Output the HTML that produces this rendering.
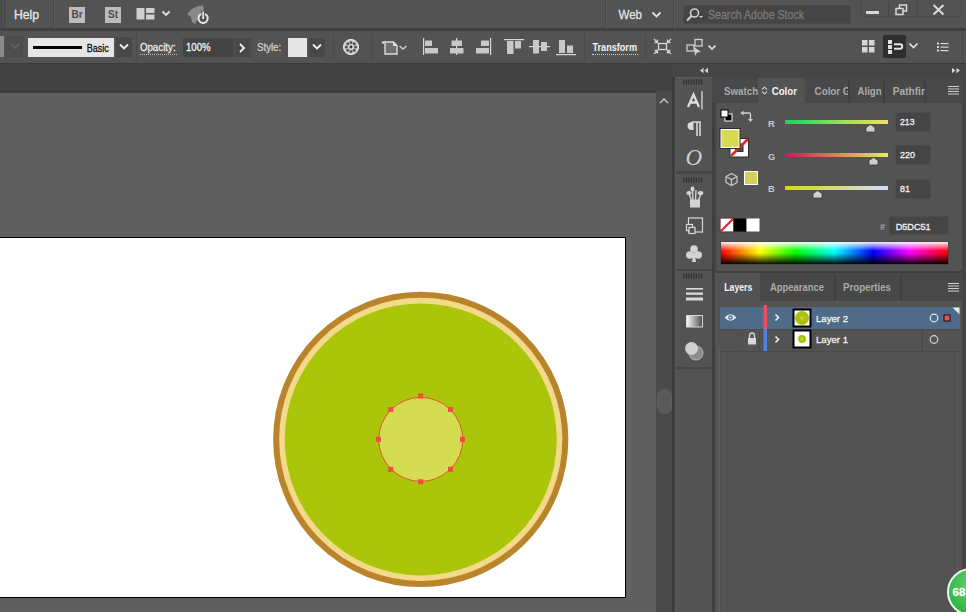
<!DOCTYPE html>
<html><head><meta charset="utf-8">
<style>
*{margin:0;padding:0;box-sizing:border-box}
html,body{width:966px;height:612px;overflow:hidden;background:#535353;font-family:"Liberation Sans",sans-serif;}
.a{position:absolute}
#menubar{left:0;top:0;width:966px;height:30px;background:#535353}
#menuline{left:0;top:28px;width:966px;height:3px;background:#3f3f3f}
#ctrl{left:0;top:31px;width:966px;height:32px;background:#535353}
#ctrlline{left:0;top:63px;width:966px;height:2px;background:#3b3b3b}
#tabstrip{left:0;top:64px;width:672px;height:26px;background:#434343}
#tabline{left:0;top:90px;width:656px;height:3px;background:#3c3c3c}
#paste{left:0;top:93px;width:656px;height:519px;background:#5f5f5f}
#sbtrack{left:656px;top:90px;width:16px;height:522px;background:#4a4a4a}
#sbthumb{left:657px;top:389px;width:15px;height:25px;background:#595959;border:1px solid #5e5e5e;border-radius:7px}
#vline1{left:672px;top:64px;width:3px;height:548px;background:#3c3c3c}
#toolcol{left:675px;top:77px;width:37px;height:535px;background:#535353;border-left:3px solid #5a5a5a}
#dockline{left:712px;top:103px;width:3px;height:509px;background:#3e3e3e}
#dockstrip{left:672px;top:64px;width:294px;height:13px;background:#454545}
#artboard{left:-2px;top:237px;width:628px;height:361px;background:#fff;border:1px solid #000}
.txt{color:#e4e4e4;font-size:13px;white-space:nowrap}
</style></head><body>
<div class="a" id="menubar"></div>
<div class="a" id="menuline"></div>
<div class="a" id="ctrl"></div>
<div class="a" id="ctrlline"></div>
<div class="a" id="tabstrip"></div>
<div class="a" id="tabline"></div>
<div class="a" id="paste"></div>
<div class="a" id="artboard"></div>
<div class="a" style="left:628px;top:238px;width:2px;height:360px;background:#656565"></div>
<div class="a" id="sbtrack"></div>
<div class="a" id="sbthumb"></div>
<svg class="a" style="left:656px;top:95px" width="16" height="12"><path d="M4 8 L8 4 L12 8" fill="none" stroke="#bdbdbd" stroke-width="1.6"/></svg>
<div class="a" id="vline1"></div>
<div class="a" id="dockstrip"></div>
<div class="a" id="toolcol"></div>
<div class="a" id="dockline"></div>


<!-- CONTROL BAR -->
<div class="a" style="left:0;top:36px;width:4px;height:21px;background:#8c8c8c"></div>
<div class="a" style="left:6px;top:36px;width:17px;height:21px;background:#4d4d4d;border:1px solid #4a4a4a"></div>
<svg class="a" style="left:9px;top:42px" width="12" height="8"><path d="M2 2 L6 6 L10 2" fill="none" stroke="#666" stroke-width="1.6"/></svg>
<div class="a" style="left:28px;top:38px;width:86px;height:19px;background:#e6e6e6"></div>
<div class="a" style="left:33px;top:46px;width:49px;height:3px;background:#000"></div>
<div class="a" style="left:116px;top:37px;width:16px;height:20px;background:#484848"></div>
<svg class="a" style="left:118px;top:42px" width="12" height="9"><path d="M2 2.5 L6 6.5 L10 2.5" fill="none" stroke="#eee" stroke-width="1.8"/></svg>
<div class="a" style="left:136px;top:34px;width:1px;height:26px;background:#4a4a4a"></div>
<div class="a" style="left:140px;top:54px;width:37px;height:1px;border-top:1px dotted #bdbdbd"></div>
<div class="a" style="left:183px;top:38px;width:51px;height:19px;background:#444"></div>
<div class="a" style="left:235px;top:38px;width:16px;height:19px;background:#484848"></div>
<svg class="a" style="left:237px;top:42px" width="10" height="12"><path d="M3 2 L7 6 L3 10" fill="none" stroke="#eee" stroke-width="1.8"/></svg>
<div class="a" style="left:288px;top:38px;width:19px;height:19px;background:#e6e6e6"></div>
<div class="a" style="left:309px;top:38px;width:16px;height:19px;background:#484848"></div>
<svg class="a" style="left:311px;top:42px" width="12" height="9"><path d="M2 2.5 L6 6.5 L10 2.5" fill="none" stroke="#eee" stroke-width="1.8"/></svg>
<div class="a" style="left:333px;top:34px;width:1px;height:26px;background:#4a4a4a"></div>
<svg class="a" style="left:341px;top:37px" width="20" height="20">
  <circle cx="10" cy="10" r="7.6" fill="#cfcfcf" stroke="#e4e4e4" stroke-width="1"/>
  <circle cx="14.60" cy="10.00" r="1.5" fill="#555"/><circle cx="13.25" cy="13.25" r="1.5" fill="#555"/><circle cx="10.00" cy="14.60" r="1.5" fill="#555"/><circle cx="6.75" cy="13.25" r="1.5" fill="#555"/><circle cx="5.40" cy="10.00" r="1.5" fill="#555"/><circle cx="6.75" cy="6.75" r="1.5" fill="#555"/><circle cx="10.00" cy="5.40" r="1.5" fill="#555"/><circle cx="13.25" cy="6.75" r="1.5" fill="#555"/>
  <circle cx="10" cy="10" r="1.4" fill="#333"/>
</svg>
<div class="a" style="left:372px;top:34px;width:1px;height:26px;background:#4b4b4b"></div>
<svg class="a" style="left:378px;top:37px" width="32" height="20">
  <path d="M7 5 L15.5 5 L19 8.5 L19 17 L7 17 Z" fill="#6e6e6e" stroke="#dcdcdc" stroke-width="1.4"/>
  <path d="M15.5 5 L15.5 8.5 L19 8.5" fill="#dcdcdc" stroke="#dcdcdc" stroke-width="1"/>
  <path d="M3 5.5 L6.5 3.5 L6.5 7.5 Z" fill="#cfcfcf"/>
  <path d="M21.5 9 L25 12 L28.5 9" fill="none" stroke="#cfcfcf" stroke-width="1.5"/>
</svg>
<svg class="a" style="left:420px;top:36px" width="170" height="22">
  <!-- align left -->
  <rect x="3" y="2" width="1.2" height="17" fill="#d8d8d8"/>
  <rect x="5" y="4.5" width="7" height="5.5" fill="#c8c8c8"/>
  <rect x="5" y="12" width="13" height="5.5" fill="#c8c8c8"/>
  <!-- align h center -->
  <rect x="36" y="2" width="1.2" height="17" fill="#d8d8d8"/>
  <rect x="31.5" y="4.5" width="10.5" height="5.5" fill="#c8c8c8"/>
  <rect x="30" y="12" width="13.5" height="5.5" fill="#c8c8c8"/>
  <!-- align right -->
  <rect x="70" y="2" width="1.2" height="17" fill="#d8d8d8"/>
  <rect x="61" y="4.5" width="8" height="5.5" fill="#c8c8c8"/>
  <rect x="56" y="12" width="13" height="5.5" fill="#c8c8c8"/>
  <!-- align top -->
  <rect x="84" y="3" width="20" height="1.2" fill="#d8d8d8"/>
  <rect x="87" y="5" width="6.5" height="13" fill="#c8c8c8"/>
  <rect x="95" y="5" width="6" height="7.5" fill="#c8c8c8"/>
  <!-- align v center -->
  <rect x="109" y="10" width="21" height="1.2" fill="#d8d8d8"/>
  <rect x="113" y="4" width="6" height="13.5" fill="#c8c8c8"/>
  <rect x="121" y="6" width="6" height="9" fill="#c8c8c8"/>
  <!-- align bottom -->
  <rect x="136" y="18" width="20" height="1.2" fill="#d8d8d8"/>
  <rect x="139" y="4" width="6" height="13" fill="#c8c8c8"/>
  <rect x="147" y="9.5" width="6" height="7.5" fill="#c8c8c8"/>
</svg>
<div class="a" style="left:584px;top:34px;width:1px;height:26px;background:#4a4a4a"></div>
<div class="a" style="left:592px;top:54px;width:46px;height:1px;border-top:1px dotted #cfcfcf"></div>
<div class="a" style="left:645px;top:34px;width:1px;height:26px;background:#4a4a4a"></div>
<svg class="a" style="left:652px;top:37px" width="22" height="20">
  <rect x="6.5" y="6.5" width="8" height="6" fill="none" stroke="#d8d8d8" stroke-width="1.3"/>
  <path d="M2 2 L5.5 5.5 M2.5 5.5 L5.5 5.5 L5.5 2.5" fill="none" stroke="#d0d0d0" stroke-width="1.3"/>
  <path d="M19 2 L15.5 5.5 M18.5 5.5 L15.5 5.5 L15.5 2.5" fill="none" stroke="#d0d0d0" stroke-width="1.3"/>
  <path d="M2 17 L5.5 13.5 M2.5 13.5 L5.5 13.5 L5.5 16.5" fill="none" stroke="#d0d0d0" stroke-width="1.3"/>
  <path d="M19 17 L15.5 13.5 M18.5 13.5 L15.5 13.5 L15.5 16.5" fill="none" stroke="#d0d0d0" stroke-width="1.3"/>
</svg>
<svg class="a" style="left:684px;top:37px" width="36" height="20">
  <rect x="3" y="8" width="7" height="6" fill="none" stroke="#d0d0d0" stroke-width="1.3"/>
  <rect x="11" y="2.5" width="7" height="6.5" fill="none" stroke="#d0d0d0" stroke-width="1.3"/>
  <path d="M10 10 L17 15 L13 15.5 L11 19 Z" fill="#d0d0d0"/>
  <path d="M24.5 8.5 L28 12 L31.5 8.5" fill="none" stroke="#e0e0e0" stroke-width="1.7"/>
</svg>
<svg class="a" style="left:858px;top:37px" width="22" height="20">
  <rect x="4" y="3" width="5.5" height="5.5" fill="#d6d6d6"/>
  <rect x="11" y="3" width="5.5" height="5.5" fill="#d6d6d6"/>
  <rect x="4" y="10" width="5.5" height="5.5" fill="#d6d6d6"/>
  <rect x="11" y="10" width="5.5" height="5.5" fill="#d6d6d6"/>
</svg>
<div class="a" style="left:883px;top:35px;width:23px;height:23px;background:#2e2e2e;border-radius:2px"></div>
<svg class="a" style="left:883px;top:35px" width="23" height="23">
  <rect x="5" y="5" width="4" height="4" fill="#e0e0e0"/>
  <rect x="5" y="10" width="4" height="4" fill="#e0e0e0"/>
  <rect x="5" y="15" width="4" height="4" fill="#e0e0e0"/>
  <path d="M11 9.2 L17 9.2 Q19.2 9.2 19.2 11.5 Q19.2 13.8 17 13.8 L11 13.8" fill="none" stroke="#e0e0e0" stroke-width="2"/>
</svg>
<svg class="a" style="left:907px;top:40px" width="14" height="12"><path d="M2.5 3.5 L6.5 7.5 L10.5 3.5" fill="none" stroke="#e0e0e0" stroke-width="1.7"/></svg>
<svg class="a" style="left:934px;top:40px" width="18" height="14">
  <rect x="3" y="2.5" width="2" height="2" fill="#d6d6d6"/><rect x="6.5" y="3" width="8" height="1.2" fill="#d6d6d6"/>
  <rect x="3" y="6" width="2" height="2" fill="#d6d6d6"/><rect x="6.5" y="6.5" width="8" height="1.2" fill="#d6d6d6"/>
  <rect x="3" y="9.5" width="2" height="2" fill="#d6d6d6"/><rect x="6.5" y="10" width="8" height="1.2" fill="#d6d6d6"/>
</svg>
<div class="a" style="left:962px;top:31px;width:1px;height:32px;background:#474747"></div>


<!-- DOCK -->
<svg class="a" style="left:698px;top:66px" width="12" height="9"><path d="M5.5 1.8 L2 4.5 L5.5 7.2 Z M10 1.8 L6.5 4.5 L10 7.2 Z" fill="#d4d4d4"/></svg>
<svg class="a" style="left:950px;top:66px" width="12" height="9"><path d="M2 1.8 L5.5 4.5 L2 7.2 Z M6.5 1.8 L10 4.5 L6.5 7.2 Z" fill="#d4d4d4"/></svg>
<!-- tool groups -->
<div class="a" style="left:676px;top:77px;width:36px;height:94px;background:#535353;border-top:1px solid #5a5a5a"></div>
<div class="a" style="left:676px;top:171px;width:36px;height:3px;background:#464646"></div>
<div class="a" style="left:676px;top:174px;width:36px;height:95px;background:#535353"></div>
<div class="a" style="left:676px;top:269px;width:36px;height:2px;background:#464646"></div>
<div class="a" style="left:676px;top:271px;width:36px;height:96px;background:#535353"></div>
<div class="a" style="left:676px;top:367px;width:36px;height:2px;background:#464646"></div>
<div class="a" style="left:676px;top:369px;width:36px;height:243px;background:#535353"></div>
<svg class="a" style="left:683px;top:79px" width="21" height="6"><path d="M1 0.5 V5.5 M3.5 0.5 V5.5 M6 0.5 V5.5 M8.5 0.5 V5.5 M11 0.5 V5.5 M13.5 0.5 V5.5 M16 0.5 V5.5 M18.5 0.5 V5.5" stroke="#333" stroke-width="1.3"/></svg>
<svg class="a" style="left:683px;top:177px" width="21" height="6"><path d="M1 0.5 V5.5 M3.5 0.5 V5.5 M6 0.5 V5.5 M8.5 0.5 V5.5 M11 0.5 V5.5 M13.5 0.5 V5.5 M16 0.5 V5.5 M18.5 0.5 V5.5" stroke="#333" stroke-width="1.3"/></svg>
<svg class="a" style="left:683px;top:273px" width="21" height="6"><path d="M1 0.5 V5.5 M3.5 0.5 V5.5 M6 0.5 V5.5 M8.5 0.5 V5.5 M11 0.5 V5.5 M13.5 0.5 V5.5 M16 0.5 V5.5 M18.5 0.5 V5.5" stroke="#333" stroke-width="1.3"/></svg>
<!-- tool icons -->
<svg class="a" style="left:676px;top:77px" width="36" height="292">
  <!-- A| -->
  <path d="M12 30 L17.5 17.5 L23 30 M14 25.5 L21 25.5" fill="none" stroke="#dcdcdc" stroke-width="2.3"/>
  <rect x="25.3" y="14" width="1.3" height="18.5" fill="#dcdcdc"/>
  <!-- pilcrow -->
  <path d="M16 45 L24 45 L24 59 M21 45 L21 59" fill="none" stroke="#d8d8d8" stroke-width="1.6"/>
  <path d="M16 45 Q11.5 45 11.5 49 Q11.5 53 16 53 L17.5 53 L17.5 45 Z" fill="#d8d8d8"/>
  <!-- italic O -->
  <text x="9.5" y="88" font-family="Liberation Serif" font-style="italic" font-size="23" fill="#d0d0d0">O</text>
  <!-- symbol sprayer -->
  <rect x="14" y="122.5" width="10" height="8" fill="#d4d4d4"/>
  <path d="M17 123 L16.5 113 M19.5 123 L20 113 M15.5 123 L13 117 M22.5 123 L25 117" stroke="#d4d4d4" stroke-width="1.4"/>
  <ellipse cx="16.5" cy="112" rx="2" ry="2.4" fill="#d4d4d4"/>
  <ellipse cx="13" cy="116" rx="2.6" ry="2" fill="#d4d4d4"/>
  <ellipse cx="24.5" cy="116" rx="2.8" ry="2" fill="#d4d4d4"/>
  <!-- artboards -->
  <rect x="12.5" y="141" width="14" height="14" fill="none" stroke="#d8d8d8" stroke-width="1.2"/>
  <rect x="10.5" y="147.5" width="6" height="6" fill="#535353" stroke="#d8d8d8" stroke-width="1.2"/>
  <rect x="13" y="150.5" width="6" height="6" fill="#535353" stroke="#d8d8d8" stroke-width="1.2"/>
  <!-- club -->
  <circle cx="18" cy="172" r="3.8" fill="#d4d4d4"/>
  <circle cx="13.8" cy="178" r="3.8" fill="#d4d4d4"/>
  <circle cx="22.2" cy="178" r="3.8" fill="#d4d4d4"/>
  <path d="M17.2 176 L16 185 L20 185 L18.8 176 Z" fill="#d4d4d4"/>
  <!-- stroke -->
  <rect x="10" y="211" width="17" height="1.6" fill="#dadada"/>
  <rect x="10" y="215.5" width="17" height="2.3" fill="#dadada"/>
  <rect x="10" y="220.5" width="17" height="3" fill="#dadada"/>
  <!-- gradient -->
  <defs><linearGradient id="tg" x1="0" x2="1" y1="0" y2="0"><stop offset="0" stop-color="#fff"/><stop offset="1" stop-color="#4a4a4a"/></linearGradient></defs>
  <rect x="10.5" y="238.5" width="16" height="11.5" fill="url(#tg)" stroke="#d8d8d8" stroke-width="1"/>
  <!-- transparency -->
  <circle cx="20" cy="276" r="7" fill="#8c8c8c" stroke="#bcbcbc" stroke-width="1"/>
  <circle cx="15.5" cy="271.5" r="6.5" fill="#cfcfcf"/>
</svg>
<!-- COLOR PANEL -->
<div class="a" style="left:712px;top:77px;width:250px;height:26px;background:#484848"></div>
<div class="a" style="left:758px;top:78px;width:47px;height:25px;background:#535353"></div>
<div class="a" style="left:716px;top:103px;width:246px;height:168px;background:#535353"></div>
<div class="a" style="left:848px;top:79px;width:2px;height:24px;background:#3f3f3f"></div>
<div class="a" style="left:883px;top:79px;width:2px;height:24px;background:#3f3f3f"></div>
<div class="a" style="left:924px;top:79px;width:2px;height:24px;background:#3f3f3f"></div>
<div class="a" style="left:962px;top:77px;width:4px;height:535px;background:#444"></div>
<svg class="a" style="left:760px;top:85px" width="9" height="11"><path d="M2 4.5 L4.5 2 L7 4.5 M2 6.5 L4.5 9 L7 6.5" fill="none" stroke="#c4c4c4" stroke-width="1.2"/></svg>
<svg class="a" style="left:947px;top:85px" width="13" height="11"><path d="M1 1.5 H12 M1 4 H12 M1 6.5 H12 M1 9 H12" stroke="#cfcfcf" stroke-width="1.2"/></svg>
<div class="a" style="left:715px;top:103px;width:2px;height:168px;background:#4a4a4a"></div>

<!-- LAYERS PANEL -->
<div class="a" style="left:716px;top:271px;width:246px;height:2px;background:#3e3e3e"></div>
<div class="a" style="left:715px;top:273px;width:247px;height:28px;background:#484848"></div>
<div class="a" style="left:715px;top:273px;width:45px;height:28px;background:#535353"></div>
<div class="a" style="left:716px;top:301px;width:246px;height:311px;background:#535353"></div>
<div class="a" style="left:834px;top:275px;width:2px;height:26px;background:#3f3f3f"></div>
<div class="a" style="left:900px;top:275px;width:2px;height:26px;background:#3f3f3f"></div>
<svg class="a" style="left:947px;top:282px" width="13" height="11"><path d="M1 1.5 H12 M1 4 H12 M1 6.5 H12 M1 9 H12" stroke="#cfcfcf" stroke-width="1.2"/></svg>
<div class="a" style="left:718px;top:350px;width:2px;height:262px;background:#5b5b5b"></div>
<div class="a" style="left:724px;top:350px;width:1px;height:262px;background:#575757"></div>
<div class="a" style="left:957px;top:350px;width:1px;height:262px;background:#5a5a5a"></div>
<div class="a" style="left:720px;top:307px;width:240px;height:22px;background:#4f6b87"></div>


<!-- COLOR PANEL CONTENT -->
<svg class="a" style="left:716px;top:103px" width="246" height="168">
  <!-- default fill stroke -->
  <rect x="9" y="11" width="7" height="7" fill="#000" stroke="#fff" stroke-width="1"/>
  <rect x="5" y="7" width="7" height="7" fill="#fff" stroke="#000" stroke-width="1"/>
  <!-- swap -->
  <path d="M26 10 L33 10 Q34.5 10 34.5 11.5 L34.5 17" fill="none" stroke="#d0d0d0" stroke-width="1.3"/>
  <path d="M24.5 10 L27.5 7.5 L27.5 12.5 Z M34.5 19 L32 16 L37 16 Z" fill="#d0d0d0"/>
  <!-- stroke none swatch -->
  <rect x="13.5" y="35" width="19.5" height="19.5" fill="#2a2a2a"/>
  <rect x="14.5" y="36" width="17.5" height="17.5" fill="#fff"/>
  <rect x="19" y="40.5" width="8.5" height="8.5" fill="#333"/>
  <rect x="20.5" y="42" width="5.5" height="5.5" fill="#535353"/>
  <path d="M15 53 L32 36" stroke="#e0262a" stroke-width="2.6"/>
  <!-- fill swatch -->
  <rect x="3.5" y="25" width="21" height="21" fill="#2a2a2a"/>
  <rect x="4.5" y="26" width="19" height="19" fill="#fff"/>
  <rect x="5.5" y="27" width="17" height="17" fill="#d5dc51"/>
  <!-- cube -->
  <path d="M15.5 70.5 L21 73.5 L21 79.5 L15.5 82.5 L10 79.5 L10 73.5 Z M10 73.5 L15.5 76.5 L21 73.5 M15.5 76.5 L15.5 82.5" fill="none" stroke="#c8c8c8" stroke-width="1.2"/>
  <!-- small swatch -->
  <rect x="28" y="68" width="14" height="14" fill="#fff"/>
  <rect x="29" y="69" width="12" height="12" fill="#d3d060"/>
  <!-- none black white -->
  <rect x="4.5" y="115.5" width="13" height="13" fill="#fff"/>
  <path d="M4.5 128.5 L17.5 115.5" stroke="#d62a2a" stroke-width="2.2"/>
  <rect x="4" y="115" width="14" height="14" fill="none" stroke="#7a1a1a" stroke-width="1" opacity="0.5"/>
  <rect x="17.5" y="115.5" width="13" height="13" fill="#000"/>
  <rect x="30.5" y="115.5" width="13" height="13" fill="#fff"/>
  <!-- RGB labels -->
  <defs>
    <linearGradient id="gr" x1="0" x2="1"><stop offset="0" stop-color="#10d860"/><stop offset="0.6" stop-color="#a8dc58"/><stop offset="1" stop-color="#f0e060"/></linearGradient>
    <linearGradient id="gg" x1="0" x2="1"><stop offset="0" stop-color="#d81060"/><stop offset="0.5" stop-color="#e08050"/><stop offset="1" stop-color="#dcf060"/></linearGradient>
    <linearGradient id="gb" x1="0" x2="1"><stop offset="0" stop-color="#d5dc00"/><stop offset="1" stop-color="#d5dcff"/></linearGradient>
    <linearGradient id="spec" x1="0" x2="1">
      <stop offset="0" stop-color="#ff0000"/><stop offset="0.17" stop-color="#ffff00"/><stop offset="0.33" stop-color="#00ff00"/>
      <stop offset="0.5" stop-color="#00ffff"/><stop offset="0.67" stop-color="#0000ff"/><stop offset="0.83" stop-color="#ff00ff"/><stop offset="1" stop-color="#ff0000"/>
    </linearGradient>
    <linearGradient id="specw" x1="0" x2="0" y1="0" y2="1"><stop offset="0" stop-color="#fff" stop-opacity="0.95"/><stop offset="0.4" stop-color="#fff" stop-opacity="0"/><stop offset="0.5" stop-color="#000" stop-opacity="0"/><stop offset="1" stop-color="#000" stop-opacity="0.95"/></linearGradient>
  </defs>
  <rect x="69" y="17" width="103" height="4" fill="url(#gr)"/>
  <rect x="69" y="50" width="103" height="4" fill="url(#gg)"/>
  <rect x="69" y="83" width="103" height="4" fill="url(#gb)"/>
  <!-- thumbs -->
  <path d="M150 29 L150 24.5 L154.5 21.5 L159 24.5 L159 29 Z" fill="#cfcfcf" stroke="#3a3a3a" stroke-width="0.8"/>
  <path d="M153 62 L153 57.5 L157.5 54.5 L162 57.5 L162 62 Z" fill="#cfcfcf" stroke="#3a3a3a" stroke-width="0.8"/>
  <path d="M97 95 L97 90.5 L101.5 87.5 L106 90.5 L106 95 Z" fill="#cfcfcf" stroke="#3a3a3a" stroke-width="0.8"/>
  <!-- value boxes -->
  <rect x="179.5" y="9.5" width="35" height="19" fill="#454545" stroke="#4d4d4d" stroke-width="1"/>
  <rect x="179.5" y="42.5" width="35" height="19" fill="#454545" stroke="#4d4d4d" stroke-width="1"/>
  <rect x="179.5" y="76.5" width="35" height="19" fill="#454545" stroke="#4d4d4d" stroke-width="1"/>
  <!-- hex -->
  <rect x="173.5" y="113.5" width="59" height="18" fill="#454545" stroke="#4d4d4d" stroke-width="1"/>
  <!-- spectrum -->
  <rect x="4.5" y="138.5" width="228" height="23" fill="#3a3a3a"/>
  <rect x="5" y="139" width="227" height="22" fill="url(#spec)"/>
  <rect x="5" y="139" width="227" height="22" fill="url(#specw)"/>
</svg>
<!-- LAYER ROWS -->
<svg class="a" style="left:716px;top:301px" width="246" height="60">
  <rect x="4" y="28" width="240" height="22" fill="#535353"/>
  <rect x="4" y="28" width="240" height="1" fill="#4a4a4a"/>
  <rect x="4" y="50" width="240" height="1" fill="#4a4a4a"/>
  <rect x="43" y="28" width="1" height="22" fill="#4a4a4a"/>
  <rect x="205.5" y="28" width="1.5" height="22" fill="#4a4a4a"/>
  <rect x="25" y="28" width="1" height="22" fill="#4e4e4e"/>
  <!-- eye -->
  <path d="M8.5 16.5 Q14.5 10 20.5 16.5 Q14.5 23 8.5 16.5 Z" fill="#dfe6ee"/>
  <circle cx="14.5" cy="16.5" r="2.3" fill="#4f6b87"/>
  <circle cx="14.5" cy="16.5" r="1" fill="#dfe6ee"/>
  <!-- lock -->
  <path d="M33.5 37 L33.5 35 Q33.5 32 36 32 Q38.5 32 38.5 35 L38.5 37" fill="none" stroke="#d8d8d8" stroke-width="1.4"/>
  <rect x="32" y="37" width="8" height="6.5" fill="#d8d8d8"/>
  <!-- color bars -->
  <rect x="47.5" y="4" width="3.5" height="24" fill="#e9505a"/>
  <rect x="47.5" y="28" width="3.5" height="22" fill="#4f7fe0"/>
  <!-- chevrons -->
  <path d="M59.5 13.5 L62.5 16.5 L59.5 19.5" fill="none" stroke="#f0f0f0" stroke-width="1.6"/>
  <path d="M59.5 35.5 L62.5 38.5 L59.5 41.5" fill="none" stroke="#f0f0f0" stroke-width="1.6"/>
  <!-- thumbs -->
  <rect x="77.5" y="8.5" width="17" height="17" fill="#fff" stroke="#000" stroke-width="2"/>
  <circle cx="86" cy="17" r="7" fill="#a9c20e"/>
  <circle cx="86" cy="17" r="1.8" fill="#c5d04a"/>
  <rect x="77.5" y="29.5" width="17" height="17" fill="#fff" stroke="#000" stroke-width="2"/>
  <circle cx="86" cy="38" r="4" fill="#a9c20e"/>
  <circle cx="86" cy="38" r="1.2" fill="#d5dc51"/>
  <!-- names -->
  <!-- targets -->
  <circle cx="218" cy="17" r="3.8" fill="none" stroke="#e0e8f0" stroke-width="1.2"/>
  <circle cx="218" cy="38.5" r="3.8" fill="none" stroke="#d8d8d8" stroke-width="1.2"/>
  <rect x="228" y="14" width="6" height="6" fill="#e9505a" stroke="#111" stroke-width="1"/>
  <path d="M236.5 6.5 L243.5 6.5 L243.5 13.5 Z" fill="#e8e8e8"/>
</svg>
<!-- badge -->
<svg class="a" style="left:940px;top:560px" width="26" height="52">
  <defs><radialGradient id="bg1" cx="0.6" cy="0.35" r="0.7"><stop offset="0" stop-color="#67d772"/><stop offset="1" stop-color="#2fb242"/></radialGradient></defs>
  <circle cx="31" cy="32" r="23" fill="url(#bg1)" stroke="#e8f8ea" stroke-width="2"/>
</svg>

<!-- circle -->
<svg class="a" style="left:0;top:0" width="966" height="612">
  <circle cx="420.75" cy="439.4" r="144.6" fill="#f3d98a" stroke="#b9842b" stroke-width="6"/>
  <circle cx="420.75" cy="439.4" r="136" fill="#abc50a"/>
  <circle cx="420.75" cy="439.4" r="42" fill="#d5dc51" stroke="#e8532f" stroke-width="1"/>
  <rect x="418.2" y="393.5" width="5" height="5" fill="#ee4f3a"/><rect x="448.0" y="407.0" width="5" height="5" fill="#ee4f3a"/><rect x="460.0" y="436.9" width="5" height="5" fill="#ee4f3a"/><rect x="448.0" y="466.8" width="5" height="5" fill="#ee4f3a"/><rect x="418.2" y="479.2" width="5" height="5" fill="#ee4f3a"/><rect x="388.2" y="466.8" width="5" height="5" fill="#ee4f3a"/><rect x="376.0" y="436.9" width="5" height="5" fill="#ee4f3a"/><rect x="388.2" y="407.0" width="5" height="5" fill="#ee4f3a"/>
</svg>


<!-- MENU BAR -->
<div class="a" style="left:0;top:0;width:3px;height:29px;background:#4a4a4a"></div>
<div class="a" style="left:4px;top:0;width:1px;height:29px;background:#434343"></div>
<div class="a" style="left:53px;top:0;width:1px;height:29px;background:#474747"></div>
<div class="a" style="left:54px;top:0;width:1px;height:29px;background:#5b5b5b"></div>
<div class="a" style="left:69px;top:7px;width:16px;height:16px;background:#bcbcbc;color:#4c4c4c;font-size:10px;font-weight:bold;line-height:16px;text-align:center;letter-spacing:0px">Br</div>
<div class="a" style="left:105px;top:7px;width:16px;height:16px;background:#bcbcbc;color:#4c4c4c;font-size:10px;font-weight:bold;line-height:16px;text-align:center">St</div>
<svg class="a" style="left:136px;top:7px" width="40" height="14">
  <rect x="0.5" y="1" width="8" height="11.5" fill="#d0d0d0"/>
  <rect x="10" y="1" width="8.5" height="5" fill="#d0d0d0"/>
  <rect x="10" y="7.5" width="8.5" height="5" fill="#d0d0d0"/>
  <path d="M26.5 4.5 L30 8 L33.5 4.5" fill="none" stroke="#e0e0e0" stroke-width="1.8"/>
</svg>
<svg class="a" style="left:184px;top:0" width="28" height="26">
  <path d="M3 14 L8 9 L14 6 L19 5.5 L20 9 L17 14 L14 19 L11 24 L8 22 L7 17 Z" fill="#8a8a8a"/>
  <circle cx="19.1" cy="18.3" r="4.6" fill="#535353" stroke="#e8e8e8" stroke-width="2"/>
  <rect x="17.3" y="11" width="3.6" height="8.5" fill="#535353"/>
  <rect x="18.3" y="11.5" width="1.7" height="7.5" fill="#e8e8e8"/>
</svg>
<div class="a" style="left:605px;top:0;width:1px;height:29px;background:#474747"></div>
<div class="a" style="left:606px;top:0;width:1px;height:29px;background:#5a5a5a"></div>
<svg class="a" style="left:650px;top:10px" width="14" height="10">
  <path d="M2.5 2.5 L6.5 6.5 L10.5 2.5" fill="none" stroke="#e0e0e0" stroke-width="1.8"/>
</svg>
<div class="a" style="left:673px;top:0;width:1px;height:29px;background:#474747"></div>
<div class="a" style="left:674px;top:0;width:1px;height:29px;background:#5a5a5a"></div>
<div class="a" style="left:683px;top:5px;width:168px;height:19px;background:#454545;border:1px solid #4a4a4a"></div>
<svg class="a" style="left:685px;top:7px" width="22" height="16">
  <circle cx="9.5" cy="6" r="4" fill="none" stroke="#cfcfcf" stroke-width="1.6"/>
  <path d="M6.7 8.8 L2 13.5" stroke="#cfcfcf" stroke-width="2"/>
  <path d="M14 9 L16 11 L18 9 Z" fill="#cfcfcf"/>
</svg>
<div class="a" style="left:860px;top:0;width:1px;height:17px;background:#484848"></div>
<div class="a" style="left:888px;top:0;width:1px;height:17px;background:#484848"></div>
<div class="a" style="left:917px;top:0;width:1px;height:17px;background:#484848"></div>
<div class="a" style="left:961px;top:0;width:1px;height:17px;background:#484848"></div>
<div class="a" style="left:860px;top:16px;width:102px;height:1px;background:#4b4b4b"></div>
<div class="a" style="left:866px;top:11px;width:13px;height:3px;background:#d8d8d8"></div>
<svg class="a" style="left:894px;top:4px" width="16" height="12">
  <rect x="5.5" y="1" width="7" height="6" fill="none" stroke="#d8d8d8" stroke-width="1.5"/>
  <rect x="2" y="4.5" width="7" height="6" fill="#535353" stroke="#d8d8d8" stroke-width="1.5"/>
</svg>
<svg class="a" style="left:931px;top:3px" width="15" height="13">
  <path d="M2.5 2 L12.5 11.5 M12.5 2 L2.5 11.5" stroke="#dadada" stroke-width="2"/>
</svg>


<!-- TEXT OVERLAY -->
<svg class="a" style="left:0;top:0" width="966" height="612" font-family="Liberation Sans">
  <text stroke="#e8e8e8" stroke-width="0.3" x="14" y="19.3" font-size="13" fill="#e8e8e8" textLength="25" lengthAdjust="spacingAndGlyphs">Help</text>
  <text stroke="#e2e2e2" stroke-width="0.3" x="618.5" y="19" font-size="13" fill="#e2e2e2" textLength="23.5" lengthAdjust="spacingAndGlyphs">Web</text>
  <text stroke="#7a7a7a" stroke-width="0.3" x="708" y="18.7" font-size="12" fill="#7a7a7a" textLength="96" lengthAdjust="spacingAndGlyphs">Search Adobe Stock</text>
  <text stroke="#111" stroke-width="0.3" x="86.7" y="51.7" font-size="10" fill="#111" textLength="22" lengthAdjust="spacingAndGlyphs">Basic</text>
  <text stroke="#e8e8e8" stroke-width="0.3" x="139.9" y="51.3" font-size="10.4" fill="#e8e8e8" textLength="35.7" lengthAdjust="spacingAndGlyphs">Opacity:</text>
  <text stroke="#f0f0f0" stroke-width="0.3" x="186" y="51.3" font-size="10.4" fill="#f0f0f0" textLength="24.5" lengthAdjust="spacingAndGlyphs">100%</text>
  <text stroke="#cccccc" stroke-width="0.3" x="257" y="51.3" font-size="10.4" fill="#cccccc" textLength="24.2" lengthAdjust="spacingAndGlyphs">Style:</text>
  <text x="592.5" y="51.3" font-size="10.2" font-weight="bold" fill="#f4f4f4" textLength="44.5" lengthAdjust="spacingAndGlyphs">Transform</text>
  <svg x="716" y="77" width="42" height="26"><text x="8" y="17.8" font-size="10.3" font-weight="bold" fill="#ababab" textLength="45" lengthAdjust="spacingAndGlyphs">Swatches</text></svg>
  <text x="771.7" y="94.8" font-size="10.3" font-weight="bold" fill="#f4f4f4" textLength="25.3" lengthAdjust="spacingAndGlyphs">Color</text>
  <svg x="806" y="77" width="42" height="26"><text x="8.6" y="17.8" font-size="10.3" font-weight="bold" fill="#ababab" textLength="56" lengthAdjust="spacingAndGlyphs">Color Guide</text></svg>
  <text x="857.6" y="94.8" font-size="10.3" font-weight="bold" fill="#ababab" textLength="24" lengthAdjust="spacingAndGlyphs">Align</text>
  <svg x="885" y="77" width="40" height="26"><text x="7.8" y="17.8" font-size="10.3" font-weight="bold" fill="#ababab" textLength="50" lengthAdjust="spacingAndGlyphs">Pathfinder</text></svg>
  <text x="724.3" y="290.8" font-size="10.3" font-weight="bold" fill="#f4f4f4" textLength="28" lengthAdjust="spacingAndGlyphs">Layers</text>
  <text x="770" y="290.8" font-size="10.3" font-weight="bold" fill="#ababab" textLength="54" lengthAdjust="spacingAndGlyphs">Appearance</text>
  <text x="843" y="290.8" font-size="10.3" font-weight="bold" fill="#ababab" textLength="48" lengthAdjust="spacingAndGlyphs">Properties</text>
  <text x="768" y="127" font-size="9.3" font-weight="bold" fill="#c8c8c8">R</text>
  <text x="768" y="160" font-size="9.3" font-weight="bold" fill="#c8c8c8">G</text>
  <text x="768" y="191.8" font-size="9.3" font-weight="bold" fill="#c8c8c8">B</text>
  <text stroke="#f0f0f0" stroke-width="0.3" x="900" y="125.2" font-size="9.5" fill="#f0f0f0" textLength="14.5" lengthAdjust="spacingAndGlyphs">213</text>
  <text stroke="#f0f0f0" stroke-width="0.3" x="900" y="158.2" font-size="9.5" fill="#f0f0f0" textLength="15" lengthAdjust="spacingAndGlyphs">220</text>
  <text stroke="#f0f0f0" stroke-width="0.3" x="900" y="192.2" font-size="9.5" fill="#f0f0f0" textLength="10" lengthAdjust="spacingAndGlyphs">81</text>
  <text x="880" y="230" font-size="9" font-weight="bold" fill="#a8a8a8">#</text>
  <text stroke="#f0f0f0" stroke-width="0.3" x="895.7" y="229.5" font-size="9.5" fill="#f0f0f0" textLength="35" lengthAdjust="spacingAndGlyphs">D5DC51</text>
  <text stroke="#f0f4f8" stroke-width="0.3" x="816" y="322" font-size="9.6" fill="#f0f4f8" textLength="32" lengthAdjust="spacingAndGlyphs">Layer 2</text>
  <text stroke="#f0f0f0" stroke-width="0.3" x="816" y="343" font-size="9.6" fill="#f0f0f0" textLength="32" lengthAdjust="spacingAndGlyphs">Layer 1</text>
  <text x="952.5" y="595.5" font-size="11.5" font-weight="bold" fill="#ffffff" stroke="#ffffff" stroke-width="0.3">68</text>
  <rect x="953" y="560" width="0" height="0"/>
</svg>
</body></html>
